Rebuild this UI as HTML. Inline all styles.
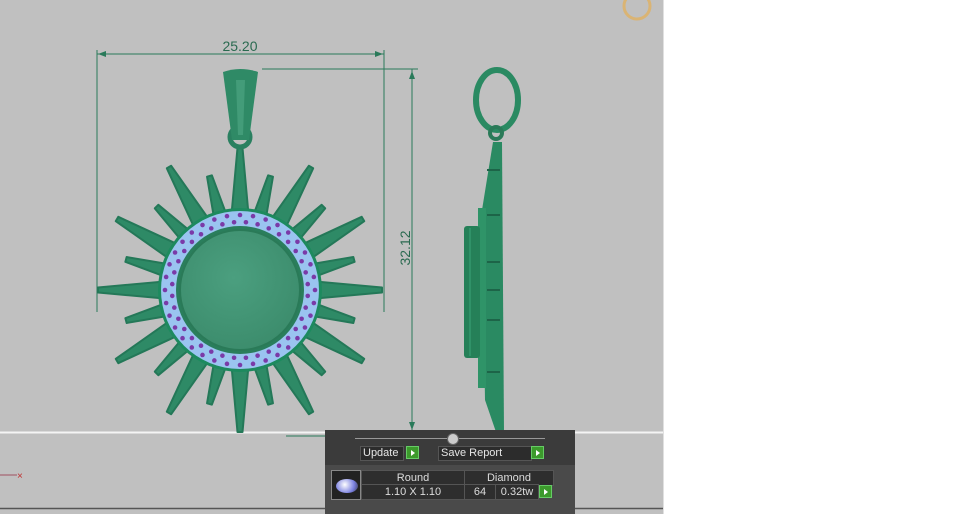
<!DOCTYPE html>
<html><head><meta charset="utf-8"><style>
html,body{margin:0;padding:0;width:960px;height:514px;overflow:hidden;background:#fff;font-family:"Liberation Sans",sans-serif}
#vp{position:absolute;left:0;top:0;width:663px;height:514px;background:#c0c0c0}
.panel{position:absolute;left:325px;top:430px;width:250px;height:84px;background:#3b3b3b}
.btn{position:absolute;height:13px;background:#2c2c2c;border:1px solid #555;color:#e6e6e6;font-size:11px;line-height:13px;padding-left:2px}
.g{position:absolute;width:11px;height:11px;background:#3c9a2c;border:1px solid #6c6;}
.g:after{content:"";position:absolute;left:4px;top:3px;border-left:4px solid #fff;border-top:3px solid transparent;border-bottom:3px solid transparent}
.cell{position:absolute;height:14px;background:#2e2e2e;color:#ddd;font-size:11px;line-height:14px;text-align:center;border:1px solid #555}
</style></head><body>
<div id="vp"></div>
<svg width="960" height="514" style="position:absolute;left:0;top:0">
<defs>
<radialGradient id="disc" cx="0.45" cy="0.4" r="0.7"><stop offset="0" stop-color="#4b9f7f"/><stop offset="1" stop-color="#3a8a6a"/></radialGradient>
</defs>
<line x1="0" y1="432.5" x2="663" y2="432.5" stroke="#f4f4f4" stroke-width="2"/>
<line x1="0" y1="508.5" x2="663" y2="508.5" stroke="#555" stroke-width="1.5"/>
<line x1="0" y1="475" x2="17" y2="475" stroke="#a05060"/>
<text x="17" y="479" font-size="10" fill="#c03030">×</text>
<circle cx="637" cy="6" r="13" fill="none" stroke="#e0b060" stroke-width="3" opacity="0.8"/>
<line x1="663.5" y1="0" x2="663.5" y2="514" stroke="#e0e0e0"/>
<g stroke="#2a7a5a" stroke-width="1" fill="none">
<line x1="97" y1="54" x2="384" y2="54"/>
<line x1="97" y1="50" x2="97" y2="312"/>
<line x1="384" y1="50" x2="384" y2="312"/>
<line x1="262" y1="69" x2="418" y2="69"/>
<line x1="412" y1="69" x2="412" y2="432"/>
<line x1="286" y1="436" x2="325" y2="436"/>
</g>
<g fill="#2a7a5a">
<path d="M98 54 l8 -3 v6z"/><path d="M383 54 l-8 -3 v6z"/>
<path d="M412 71 l-3 8 h6z"/><path d="M412 430 l-3 -8 h6z"/>
</g>
<text x="240" y="51" font-size="14" fill="#2a6a50" text-anchor="middle">25.20</text>
<text transform="translate(410,248) rotate(-90)" font-size="14" fill="#2a6a50" text-anchor="middle">32.12</text>
<g id="rays"></g>
<circle cx="240" cy="137" r="10" fill="none" stroke="#2a8060" stroke-width="5"/>
<path d="M223 72 Q240 66 258 72 L249 140 L232 140Z" fill="#2f8a66"/>
<path d="M236 80 L245 80 L243 135 L238 135Z" fill="#52a886" opacity="0.6"/>
<circle cx="240" cy="290" r="82" fill="#1d8a5e"/>
<circle cx="240" cy="290" r="79" fill="#9ac4f0"/>
<g id="dots"></g>
<circle cx="240" cy="290" r="64" fill="#2a7e5c"/>
<circle cx="240" cy="290" r="60" fill="url(#disc)" stroke="#2a7a58" stroke-width="2"/>
<ellipse cx="497" cy="100" rx="21" ry="30" fill="none" stroke="#2a8a62" stroke-width="6"/>
<circle cx="496" cy="133" r="6" fill="none" stroke="#2a7a58" stroke-width="4"/>
<path d="M493 142 L502 142 L504 432 L496 432 L485 400 L482 210 Z" fill="#2a8a62"/>
<rect x="478" y="208" width="8" height="180" fill="#2f9468"/>
<rect x="464" y="226" width="16" height="132" rx="3" fill="#258058"/>
<line x1="470" y1="228" x2="470" y2="356" stroke="#3aa478"/>
<g stroke="#1d6448" stroke-width="2"><line x1="487" y1="170" x2="500" y2="170"/><line x1="487" y1="215" x2="500" y2="215"/><line x1="487" y1="262" x2="500" y2="262"/><line x1="487" y1="290" x2="500" y2="290"/><line x1="487" y1="320" x2="500" y2="320"/><line x1="487" y1="372" x2="500" y2="372"/></g>
</svg>
<div class="panel">
<div style="position:absolute;left:30px;top:8px;width:190px;height:1px;background:#999"></div>
<div style="position:absolute;left:122px;top:3px;width:10px;height:10px;border-radius:50%;background:#ccc;border:1px solid #666"></div>
<div class="btn" style="left:35px;top:16px;width:40px">Update</div><div class="g" style="left:81px;top:16px"></div>
<div class="btn" style="left:113px;top:16px;width:90px">Save Report</div><div class="g" style="left:206px;top:16px"></div>
<div style="position:absolute;left:0;top:35px;width:250px;height:49px;background:#4a4a4a"></div>
<div style="position:absolute;left:6px;top:40px;width:28px;height:28px;background:#222;border:1px solid #888"><div style="position:absolute;left:4px;top:8px;width:22px;height:14px;border-radius:50%;background:radial-gradient(circle at 40% 40%,#fff,#7a80e0 60%,#334)"></div></div>
<div class="cell" style="left:36px;top:40px;width:102px">Round</div>
<div class="cell" style="left:139px;top:40px;width:88px">Diamond</div>
<div class="cell" style="left:36px;top:54px;width:102px">1.10 X 1.10</div>
<div class="cell" style="left:139px;top:54px;width:30px">64</div>
<div class="cell" style="left:170px;top:54px;width:42px">0.32tw</div>
<div class="g" style="left:214px;top:55px"></div>
</div>
<script>
var ns="http://www.w3.org/2000/svg",r=document.getElementById("rays"),cx=240,cy=290;
for(var i=0;i<24;i++){var a=(-90+i*15)*Math.PI/180,L=i%2?118:142,w=i%2?7:9;
var c=Math.cos(a),s=Math.sin(a),px=-s,py=c,b=70;
var p=document.createElementNS(ns,"path");
p.setAttribute("d","M"+(cx+c*b+px*w)+" "+(cy+s*b+py*w)+"L"+(cx+c*L+px*2.5)+" "+(cy+s*L+py*2.5)+"L"+(cx+c*L-px*2.5)+" "+(cy+s*L-py*2.5)+"L"+(cx+c*b-px*w)+" "+(cy+s*b-py*w)+"Z");
p.setAttribute("fill","#2e8a66");p.setAttribute("stroke","#247858");p.setAttribute("stroke-width","2");p.setAttribute("stroke-linejoin","round");r.appendChild(p);}
var d=document.getElementById("dots");
[[75,36],[68,36]].forEach(function(q,k){for(var j=0;j<q[1];j++){var a=(j+k*0.5)*2*Math.PI/q[1];var e=document.createElementNS(ns,"circle");
e.setAttribute("cx",cx+Math.cos(a)*q[0]);e.setAttribute("cy",cy+Math.sin(a)*q[0]);e.setAttribute("r",2.3);e.setAttribute("fill","#7a3aa8");d.appendChild(e);}});
</script>
</body></html>
